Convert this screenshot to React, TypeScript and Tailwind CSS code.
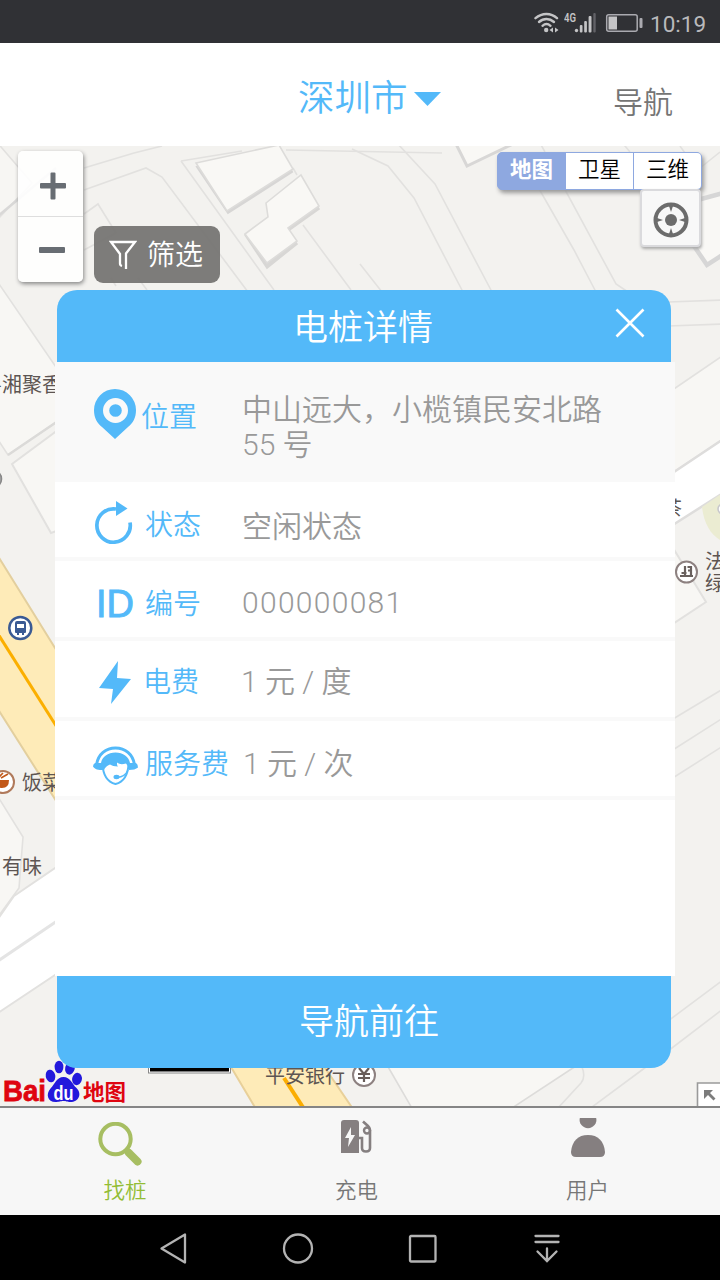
import React from "react";

const Wifi = () => (
  <svg width="26" height="22" viewBox="0 0 26 22" fill="none" stroke="#c4c4c6" strokeWidth="2.400" strokeLinecap="round">
    <path d="M1.500 6.200C8 .5 17 .5 23 6.200" />
    <path d="M5 10C9.500 6 15.500 6 20 10" />
    <path d="M8.500 13.800C11 11.600 14 11.600 16.500 13.800" />
    <circle cx="12.200" cy="18" r="2.200" fill="#c4c4c6" stroke="none" />
    <path d="M15.500 18l3.500-2.500v5zM24.500 18L21 15.500v5z" fill="#c4c4c6" stroke="none" />
  </svg>
);

const Signal = () => (
  <svg width="32" height="24" viewBox="0 0 32 24" fill="#c4c4c6">
    <circle cx="12.500" cy="21.500" r="1.700" />
    <rect x="15.800" y="16" width="2.700" height="7.500" rx="1" />
    <rect x="20.200" y="12" width="2.700" height="11.500" rx="1" />
    <rect x="24.600" y="7" width="2.900" height="16.500" rx="1" />
    <rect x="29.300" y="4" width="2.400" height="19.500" rx="1" fill="#626267" />
    <text x="0" y="13" fontFamily="Roboto, sans-serif" fontWeight="600" fontSize="13" textLength="12" lengthAdjust="spacingAndGlyphs">4G</text>
  </svg>
);

const MapCanvas = () => (
  <svg className="block h-full w-full" viewBox="0 146 720 960" fill="none" stroke="#e2e1df" strokeWidth="1.600">
    <rect x="0" y="146" width="720" height="960" fill="#f3f2ef" stroke="none" />
    <path d="M-5 140L32 183 -5 222z" fill="#f7f6f3" />
    <path d="M-2 216l58-48" stroke="#d9d8d7" strokeWidth="2.500" />
    <path d="M84 168l50-15 28-7M84 190l62-22 16 9 86 115M84 214l14-10 18 29M84 250l32-17M116 286l-5-8M138 278l9 12" />
    <path d="M-5 278l63 92v51L8 455l-13-20z" fill="#f8f7f4" />
    <path d="M8 455l50-34" strokeWidth="2.400" stroke="#dbdad8" />
    <path d="M12 464l50-37v102l-11 4z" fill="#f8f7f4" strokeWidth="2" />
    <path d="M244 290L181 161l61-10M273 290l-92-129M303 225l50 65M312 222l6 4 48 70M275 184l4 5M290 149l170 3" stroke="none" />
    <path d="M181 161l61-10M181 161l93 129M303 225l48 65M286 150l156 3M293 168l4 7" />
    <path d="M197 167l82-20 13 25-64 41z" fill="#d7d6d5" stroke="#d7d6d5" strokeWidth="2" />
    <path d="M196 163l83-18 14 24-66 42z" fill="#f9f8f5" stroke="#dddcda" />
    <path d="M268 206l33-27 18 30-31 22 9 13-30 24-22-33 23-17z" fill="#d8d7d5" stroke="#d8d7d5" />
    <path d="M266 203l35-28 18 31-31 22 9 13-30 22-22-29 23-17z" fill="#f9f8f5" stroke="#dddcda" />
    <path d="M352 149l36 17 26 32 49 94M397 143l38 41 57 108M360 264l22 28M530 173l44 77 22 42M556 173l60 111 12 8M540 143l5 9M620 140l10 12M680 146l12 17M700 168l20-16" />
    <path d="M456 144l11 22 46-22" fill="#f9f8f5" stroke="#d8d7d6" strokeWidth="3" />
    <path d="M668 208l39 57 20-13v-60z" fill="#f9f8f5" stroke="#d6d6d6" strokeWidth="4.500" />
    <path d="M668 302l55-2M668 326l55-2" />
    <path d="M668 393l60-41v84l-60 40z" fill="#f8f7f4" />
    <path d="M668 476l60-40v54l-60 38z" fill="#fff" stroke="#dedddc" strokeWidth="2.500" />
    <path d="M702 507l22-15v50c-12-5-20-17-22-35z" fill="#ebecd2" stroke="none" />
    <circle cx="723" cy="509" r="5" fill="#fff" stroke="#c8c8cc" />
    <path d="M670 543l36 59-38 25z" fill="#f8f7f4" strokeWidth="2" />
    <path d="M668 722l55-33M668 753l55-35M668 781l55-35M668 1021l55-41M668 1051l55-42" />
    <path d="M-4 553l64 103v151L-4 706z" fill="#feebb8" stroke="#e3cf9e" strokeWidth="2" />
    <path d="M-2 634l62 98" stroke="#fbaf00" strokeWidth="3" />
    <path d="M-5 792l28 45-4 51-24 33z" fill="#f8f7f4" />
    <path d="M14 896l50-34v107L-5 1015v-92z" fill="#fff" strokeWidth="2" />
    <path d="M-5 963l65-44" stroke="#e4e4e4" strokeWidth="3" />
    <path d="M228 1062l28 47h97l-32-47z" fill="#feebb8" stroke="#e8d09a" strokeWidth="2" />
    <path d="M284 1078l22 34" stroke="#fbad00" strokeWidth="4" />
    <path d="M387 1065l26 45h96l70-46z" fill="#f8f7f4" stroke="#dddcda" />
    <path d="M582 1067q4 10-1 16l-23 25M646 1067l-58 43" />
    <rect x="148.500" y="1058" width="82" height="15" fill="#fff" stroke="#888" strokeWidth="1" />
    <path d="M150 1069.500h79" stroke="#000" strokeWidth="4" />
    <g stroke="none" fill="#5d5552" fontFamily="'Noto Sans CJK SC', sans-serif" fontSize="20" fontWeight="400">
      <text x="-18" y="392">粤湘聚香</text>
      <text x="22" y="790">饭菜</text>
      <text x="2" y="874">有味</text>
      <text x="662" y="516">茶</text>
      <text x="705" y="569">法</text>
      <text x="705" y="591">绿</text>
      <text x="265" y="1083">平安银行</text>
    </g>
    <circle cx="20.300" cy="628" r="11" fill="#fff" stroke="#3a5a94" strokeWidth="2.500" />
    <path d="M17 621h7q2 0 2 2v9q0 1-1 1h-1v2h-2v-2h-3v2h-2v-2h-1q-1 0-1-1v-9q0-2 2-2zM17 624v4h7v-4z" fill="#3a5a94" fillRule="evenodd" stroke="none" />
    <circle cx="3" cy="782" r="11" fill="#fff" stroke="#b07a5b" strokeWidth="2" />
    <path d="M-5 780H9q0 8-7 8t-7-8z" fill="#c25819" stroke="none" />
    <path d="M1 778l7-4M-2 778l5-5" stroke="#c25819" />
    <circle cx="-7" cy="479" r="8.500" fill="#aaa" stroke="#888" />
    <circle cx="686.500" cy="572" r="10.500" fill="#fff" stroke="#8d8180" strokeWidth="2" />
    <path d="M680 576h13M681.500 573h5M685 575v-9M691 575v-9M687.500 567h4M688 570.500h3" stroke="#69605d" strokeWidth="2.200" />
    <circle cx="364" cy="1075" r="11" fill="#fff" stroke="#8d8180" strokeWidth="2" />
    <path d="M359 1068l5 6 5-6M358 1074h12M358 1078h12M364 1074v8" stroke="#695d59" strokeWidth="2.200" />
    <path d="M697.500 1110v-27H724v27z" fill="#fff" stroke="#9a9a9a" />
    <path d="M704 1090h9l-3 3 5.500 5.500-2 2L708 1095l-4 4z" fill="#7c7c7c" stroke="none" />
  </svg>
);

const BaiduLogo = () => (
  <svg width="130" height="50" viewBox="0 0 130 50">
    <g fill="#2319dc">
      <ellipse cx="49.500" cy="20" rx="4.800" ry="6.300" transform="rotate(-12 49.500 20)" />
      <ellipse cx="58" cy="11" rx="4.400" ry="6.300" />
      <ellipse cx="69" cy="12" rx="4.800" ry="6.700" transform="rotate(12 69 12)" />
      <ellipse cx="76" cy="23" rx="4.900" ry="6.200" transform="rotate(12 76 23)" />
      <path d="M62.500 21c7 0 8.500 7 13 11 6 6 2 14-6 14-4 0-4-1-7-1s-4 1-8 1c-8 0-10-8-5-13.500 4.500-4.500 6-11.500 13-11.500z" />
    </g>
    <g fontFamily="'Liberation Sans', sans-serif" fontWeight="700">
      <text x="2" y="45" fill="#df0510" stroke="#df0510" strokeWidth=".8" fontSize="30" textLength="43" lengthAdjust="spacingAndGlyphs">Bai</text>
      <text x="52.500" y="43.500" fill="#fff" fontSize="20" textLength="20" lengthAdjust="spacingAndGlyphs">du</text>
      <text x="82" y="43.500" fill="#df0510" fontFamily="'Noto Sans CJK SC', sans-serif" fontSize="21.500">地图</text>
    </g>
  </svg>
);

const PinIcon = () => (
  <svg width="42" height="50" viewBox="0 0 42 50">
    <path d="M21 0a21 21 0 0 1 21 21c0 8-3 13-8 17L21 50 8 38C3 34 0 29 0 21A21 21 0 0 1 21 0z" fill="#53b9f9" />
    <circle cx="21.500" cy="21.500" r="9.400" fill="#53b9f9" stroke="#f9f9f9" strokeWidth="6.200" />
  </svg>
);

const StatusIcon = () => (
  <svg width="38" height="44" viewBox="0 0 38 44">
    <path d="M35 21.500a16.700 16.700 0 1 1-14-13.500" fill="none" stroke="#53b9f9" strokeWidth="3.700" />
    <path d="M21 0l11.500 7.500L21 15z" fill="#53b9f9" />
  </svg>
);

const BoltIcon = () => (
  <svg width="32" height="44" viewBox="0 0 32 44">
    <path d="M19 0L0 27l14 1-2 15 20-25-14-1z" fill="#53b9f9" />
  </svg>
);

const HeadsetIcon = () => (
  <svg width="46" height="40" viewBox="0 0 46 40" fill="none" stroke="#53b9f9">
    <path d="M3.500 19C5 8 13 2 22.500 2S40 8 41.500 19" strokeWidth="3" />
    <path d="M9.500 18c.5 11 5 18 13 20 8-2 12.500-9 13-20" strokeWidth="2" />
    <path d="M2 17h6C9 11 15 6.500 22.500 6.500S36 11 37 17h6q2 1 2 4.500Q42 24 36 24c0-3-1-4-3-6.500-4 1-6 1-9-1 0 2 0 3 1 4-4 0-6-1-8-2-3 1-5 3-6 5.500-6 0-9-.5-11-3.500q0-2.500 2-3.500z" fill="#53b9f9" stroke="none" />
    <path d="M35 24c-2 5-5 7-11 7.500" strokeWidth="1.500" />
    <ellipse cx="23.500" cy="31" rx="3" ry="2.200" fill="#53b9f9" stroke="none" />
  </svg>
);

type RowProps = {
  box: string;
  iconBox: string;
  icon: React.ReactNode;
  label: string;
  labelBox: string;
  value: React.ReactNode;
  valueBox: string;
};

const rows: RowProps[] = [
  { box: "h-[120px] bg-[#f9f9f9]", iconBox: "ml-[39px] mt-[27px] w-[47px]", icon: <PinIcon />, label: "位置", labelBox: "mt-[38px] w-[101px]", value: <>中山远大，小榄镇民安北路<br />55 号</>, valueBox: "mt-[30px]" },
  { box: "h-[79px] border-b-4 border-[#f9f9f9]", iconBox: "ml-[40px] mt-[19px] w-[50px]", icon: <StatusIcon />, label: "状态", labelBox: "mt-[26px] w-[97px]", value: "空闲状态", valueBox: "mt-[27px]" },
  { box: "h-[80px] border-b-4 border-[#f9f9f9]", iconBox: "ml-[41px] mt-[21px] w-[49px]", icon: <span className="block font-['Liberation_Sans',sans-serif] text-[38px] leading-[44px] text-[#53b9f9] [-webkit-text-stroke:0.9px_#53b9f9]">ID</span>, label: "编号", labelBox: "mt-[26px] w-[97px]", value: <span className="tracking-[1.300px]">000000081</span>, valueBox: "mt-[24px]" },
  { box: "h-[80px] border-b-4 border-[#f9f9f9]", iconBox: "ml-[44px] mt-[20px] w-[44px]", icon: <BoltIcon />, label: "电费", labelBox: "mt-[24px] w-[98px]", value: "1 元 / 度", valueBox: "mt-[23px]" },
  { box: "h-[79px] border-b-4 border-[#f9f9f9]", iconBox: "ml-[38px] mt-[25px] w-[52px]", icon: <HeadsetIcon />, label: "服务费", labelBox: "mt-[26px] w-[98px]", value: "1 元 / 次", valueBox: "mt-[25px]" },
];

const DetailRow = ({ box, iconBox, icon, label, labelBox, value, valueBox }: RowProps) => (
  <div className={`flex items-start ${box}`}>
    <div className={`shrink-0 ${iconBox}`}>{icon}</div>
    <div className={`shrink-0 whitespace-nowrap text-[28px] font-[350] leading-[36px] text-[#53b9f9] ${labelBox}`}>{label}</div>
    <div className={`whitespace-nowrap font-['Roboto','Noto_Sans_CJK_SC',sans-serif] text-[30px] font-[350] leading-[35px] text-[#999] ${valueBox}`}>{value}</div>
  </div>
);

const StationDetail = () => (
  <section className="absolute left-[55px] top-[144px] flex h-[778px] w-[620px] flex-col">
    <header className="ml-[2px] flex h-[72px] w-[614px] shrink-0 items-start rounded-t-[20px] bg-[#53b9f9] text-white">
      <h2 className="ml-[236px] mt-[12px] w-[322px] text-[35px] font-[350] leading-[52px]">电桩详情</h2>
      <button aria-label="关闭" className="mt-[18px]">
        <svg width="30" height="30" viewBox="0 0 30 30" stroke="#fff" strokeWidth="2.600"><path d="M1.500 1.500l27 27M28.500 1.500l-27 27" /></svg>
      </button>
    </header>
    <div className="h-[614px] shrink-0 bg-white">
      {rows.map((row) => <DetailRow key={row.label} {...row} />)}
    </div>
    <button className="ml-[2px] h-[92px] w-[614px] shrink-0 rounded-b-[20px] bg-[#53b9f9] pl-[10px] text-[35px] font-[350] text-white">导航前往</button>
  </section>
);

const SearchIcon = () => (
  <svg width="46" height="46" viewBox="0 0 46 46" fill="none" stroke="#a7be62">
    <circle cx="17.500" cy="17" r="15.200" strokeWidth="4" />
    <path d="M28 28l2 2" strokeWidth="5" />
    <path d="M31 31l8.500 8.500" strokeWidth="8" strokeLinecap="round" />
  </svg>
);

const ChargeIcon = () => (
  <svg width="32" height="34" viewBox="0 0 32 34">
    <path d="M3 0h12q3 0 3 3v30H0V3q0-3 3-3z" fill="#857f80" />
    <path d="M10 7L4 18h4l-1 9 7-12h-4z" fill="#f7f7f7" />
    <path d="M18 18h3v10q0 3.500 4 3.500t4-3.500V10q0-2-2-4l-5-4.500" fill="none" stroke="#857f80" strokeWidth="2.600" />
    <circle cx="26" cy="10.500" r="3" fill="none" stroke="#857f80" strokeWidth="2.400" />
  </svg>
);

const UserIcon = () => (
  <svg width="34" height="40" viewBox="0 0 34 40" fill="#857f80">
    <path d="M8.800 0h16.400A8.400 8.400 0 1 1 8.800 0z" transform="translate(0 0)" />
    <path d="M0 34C1 23 7 17 17 17s16 6 17 17q0 5-5 5H5q-5 0-5-5z" />
  </svg>
);

export default function App() {
  return (
    <main className="flex h-[1280px] w-[720px] flex-col overflow-hidden bg-white font-['Liberation_Sans','Noto_Sans_CJK_SC',sans-serif]">
      <div className="flex h-[43px] shrink-0 items-start bg-[#303135] text-[#b9b9bc]">
        <div className="ml-[534px] mt-[12px] w-[30px]"><Wifi /></div>
        <div className="mt-[9px] w-[41px]"><Signal /></div>
        <svg className="mt-[13px] mr-[7px]" width="38" height="20" viewBox="0 0 38 20">
          <rect x="1.700" y="1.700" width="30.500" height="16.600" rx="2" fill="none" stroke="#aaaab0" strokeWidth="1.500" />
          <rect x="3.500" y="3.500" width="8.500" height="13" fill="#c4c4c6" />
          <rect x="34.500" y="5" width="3" height="10" rx="1" fill="#aaaab0" />
        </svg>
        <span className="mt-[9px] font-['Roboto',sans-serif] text-[22.500px] leading-[31px]">10:19</span>
      </div>

      <header className="flex h-[103px] shrink-0 items-start bg-white">
        <button className="ml-[298px] mt-[30px] flex w-[315px] items-center gap-[6px] text-[36.500px] font-[350] leading-[52px] text-[#53b9f9]">
          深圳市
          <svg width="27" height="14" viewBox="0 0 27 14"><path d="M0 0h27L13.500 14z" fill="#53b9f9" /></svg>
        </button>
        <span className="mt-[38px] text-[30px] font-[350] leading-[44px] text-[#757575]">导航</span>
      </header>

      <div className="relative h-[960px] shrink-0 overflow-hidden">
        <MapCanvas />
        <div className="absolute left-[18px] top-[5px] flex h-[131px] w-[65px] flex-col rounded-[5px] bg-white/90 shadow-[1px_2px_4px_#888]">
          <button aria-label="放大" className="flex h-[66px] items-center justify-center border-b border-[#dedede] pl-[5px] pt-[5px]">
            <svg width="26" height="28" viewBox="0 0 26 28"><path d="M11.500 .5h3q1 0 1 1V11H25q1 0 1 1v3.500q0 1-1 1h-9.500v10q0 1-1 1h-3q-1 0-1-1v-10H1q-1 0-1-1V12q0-1 1-1h9.500V1.500q0-1 1-1z" fill="#686d73" /></svg>
          </button>
          <button aria-label="缩小" className="flex h-[65px] items-center justify-center pl-[3px]">
            <span className="block h-[6px] w-[26px] rounded-[1px] bg-[#686d73]" />
          </button>
        </div>
        <button className="absolute left-[94px] top-[80px] flex h-[57px] w-[126px] items-center rounded-[9px] bg-[#767573]/95 pl-[15px] text-white">
          <svg width="28" height="32" viewBox="0 0 28 32" fill="none" stroke="#fff" strokeWidth="2.300"><path d="M13 27q-2-.5-2-2.500V15L2 3h24l-9 11.500V30" /></svg>
          <span className="ml-[10px] mt-[3px] text-[28px] font-[350] leading-[40px]">筛选</span>
        </button>
        <div className="absolute left-[497px] top-[6px] flex h-[38px] w-[205px] gap-px overflow-visible rounded-[5px] border border-[#8ea8e0] bg-[#8ea8e0] text-[21.500px] leading-[34px] text-black shadow-[2px_3px_4px_#999]">
          <span className="w-[67px] text-center font-bold text-white">地图</span>
          <span className="w-[67px] bg-white text-center font-[350]">卫星</span>
          <span className="w-[67px] rounded-r-[4px] bg-white text-center font-[350]">三维</span>
        </div>
        <button aria-label="定位" className="absolute left-[640px] top-[43px] flex h-[58px] w-[61px] items-center justify-center rounded-[4px] border-2 border-[#dadadd] bg-[#f8f8f8] pt-[3px] shadow-[1px_2px_3px_#aaa]">
          <svg width="36" height="36" viewBox="0 0 36 36" fill="none" stroke="#6c6c6c">
            <circle cx="18" cy="18" r="15.500" strokeWidth="4" />
            <circle cx="18" cy="18" r="6" fill="#6c6c6c" stroke="none" />
            <path d="M16 4h4l-2 6zM16 32h4l-2-6zM4 16v4l6-2zM32 16v4l-6-2z" fill="#6c6c6c" stroke="none" />
          </svg>
        </button>
        <div className="absolute left-[1px] top-[910px]"><BaiduLogo /></div>
        <StationDetail />
      </div>

      <nav className="flex h-[109px] shrink-0 border-t-2 border-[#858585] bg-[#f7f7f7] text-[21.500px] font-[350] leading-[28px] text-[#777]">
        <button className="ml-[9px] flex w-[232px] flex-col items-center text-[#93bd35]">
          <span className="mt-[14px] h-[55px] -translate-x-[4px]"><SearchIcon /></span>找桩
        </button>
        <button className="flex w-[231px] flex-col items-center">
          <span className="mt-[12px] h-[57px]"><ChargeIcon /></span>充电
        </button>
        <button className="flex w-[231px] flex-col items-center">
          <span className="mt-[10px] h-[59px]"><UserIcon /></span>用户
        </button>
      </nav>

      <div className="flex h-[65px] shrink-0 items-start bg-black">
        <svg className="ml-[159px] mt-[17px]" width="29" height="33" viewBox="0 0 29 33" fill="none" stroke="#b3b3b3" strokeWidth="2.300" strokeLinejoin="round"><path d="M26 2.500v28L2.500 16.500z" /></svg>
        <svg className="ml-[94px] mt-[17px]" width="32" height="32" viewBox="0 0 32 32" fill="none" stroke="#b3b3b3" strokeWidth="2.300"><circle cx="16" cy="16.500" r="14" /></svg>
        <svg className="ml-[94px] mt-[19px]" width="30" height="30" viewBox="0 0 30 30" fill="none" stroke="#b3b3b3" strokeWidth="2.300"><rect x="2" y="2" width="25.500" height="25.500" rx="1" /></svg>
        <svg className="ml-[96px] mt-[19px]" width="26" height="30" viewBox="0 0 26 30" fill="none" stroke="#b3b3b3" strokeWidth="2.300" strokeLinecap="round"><path d="M1.500 2h23M1.500 8h23M13 14.500V27M3.500 17.500L13 27l9.500-9.500" /></svg>
      </div>
    </main>
  );
}
